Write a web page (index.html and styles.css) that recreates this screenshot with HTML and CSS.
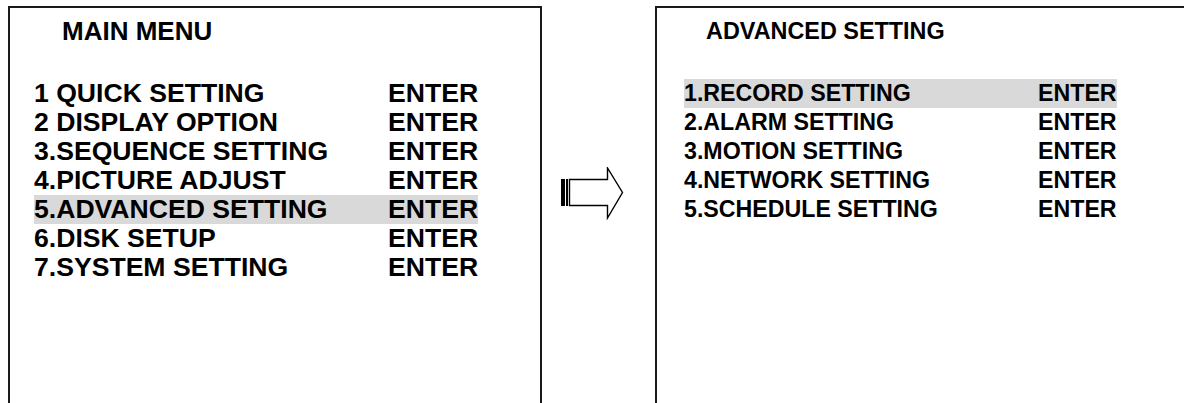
FILE: index.html
```
<!DOCTYPE html>
<html lang="en">
<head>
    <meta charset="UTF-8">
    <title>Main Menu / Advanced Setting</title>
    <link rel="stylesheet" href="styles.css">
</head>
<body>

<div class="screens">
    <!-- Main menu -->
    <div class="panel panel-main">
        <div class="title">MAIN MENU</div>
        <div class="menu">
            <div class="row"><span class="label">1 QUICK SETTING</span><span class="action">ENTER</span></div>
            <div class="row"><span class="label">2 DISPLAY OPTION</span><span class="action">ENTER</span></div>
            <div class="row"><span class="label">3.SEQUENCE SETTING</span><span class="action">ENTER</span></div>
            <div class="row"><span class="label">4.PICTURE ADJUST</span><span class="action">ENTER</span></div>
            <div class="row selected"><span class="label">5.ADVANCED SETTING</span><span class="action">ENTER</span></div>
            <div class="row"><span class="label">6.DISK SETUP</span><span class="action">ENTER</span></div>
            <div class="row"><span class="label">7.SYSTEM SETTING</span><span class="action">ENTER</span></div>
        </div>
    </div>

    <!-- Arrow -->
    <div class="arrow">
        <svg width="64" height="54" viewBox="0 0 64 54">
            <rect x="0" y="12" width="4" height="27" fill="#000"/>
            <rect x="5" y="12" width="2" height="27" fill="#000"/>
            <polygon points="8.5,12.5 46.5,12.5 46.5,1 61.5,25.5 46.5,51 46.5,38.5 8.5,38.5" fill="#fff" stroke="#000" stroke-width="1.4"/>
        </svg>
    </div>

    <!-- Advanced setting -->
    <div class="panel panel-sub">
        <div class="title">ADVANCED SETTING</div>
        <div class="menu">
            <div class="row selected"><span class="label">1.RECORD SETTING</span><span class="action">ENTER</span></div>
            <div class="row"><span class="label">2.ALARM SETTING</span><span class="action">ENTER</span></div>
            <div class="row"><span class="label">3.MOTION SETTING</span><span class="action">ENTER</span></div>
            <div class="row"><span class="label">4.NETWORK SETTING</span><span class="action">ENTER</span></div>
            <div class="row"><span class="label">5.SCHEDULE SETTING</span><span class="action">ENTER</span></div>
        </div>
    </div>
</div>

</body>
</html>
```

FILE: styles.css
```
/* Base */
body {
    margin: 0;
    padding: 0;
    background-color: #fff;
    color: #000;
    font-family: 'Liberation Sans', Arial, sans-serif;
    font-weight: 700;
    overflow: hidden;
}

.screens {
    display: flex;
    align-items: flex-start;
    padding: 6px 0 0 8px;
}

/* Menu boxes */
.panel {
    height: 397px;
    border: 2px solid #1a1a1a;
    border-bottom: none;
    box-sizing: border-box;
}

.panel-main {
    width: 534px;
    padding: 10px 0 0 24px;
    font-size: 26.6px;
}

.panel-sub {
    flex: 1;
    border-right: none;
    padding: 10px 0 0 27px;
    font-size: 23.2px;
}

.title {
    line-height: 26px;
    height: 61px;
}

.panel-main .title {
    padding-left: 28px;
    font-size: 26px;
}

.panel-sub .title {
    padding-left: 22px;
    font-size: 23.4px;
}

.menu {
    display: flex;
    flex-direction: column;
    align-items: flex-start;
}

.row {
    display: flex;
    line-height: 29px;
}

.row .label {
    width: 354px;
}

.row.selected {
    background-color: #d9d9d9;
}

/* Arrow between the screens */
.arrow {
    width: 113px;
    padding: 161px 0 0 19px;
    box-sizing: border-box;
}

.arrow svg {
    display: block;
}
```
